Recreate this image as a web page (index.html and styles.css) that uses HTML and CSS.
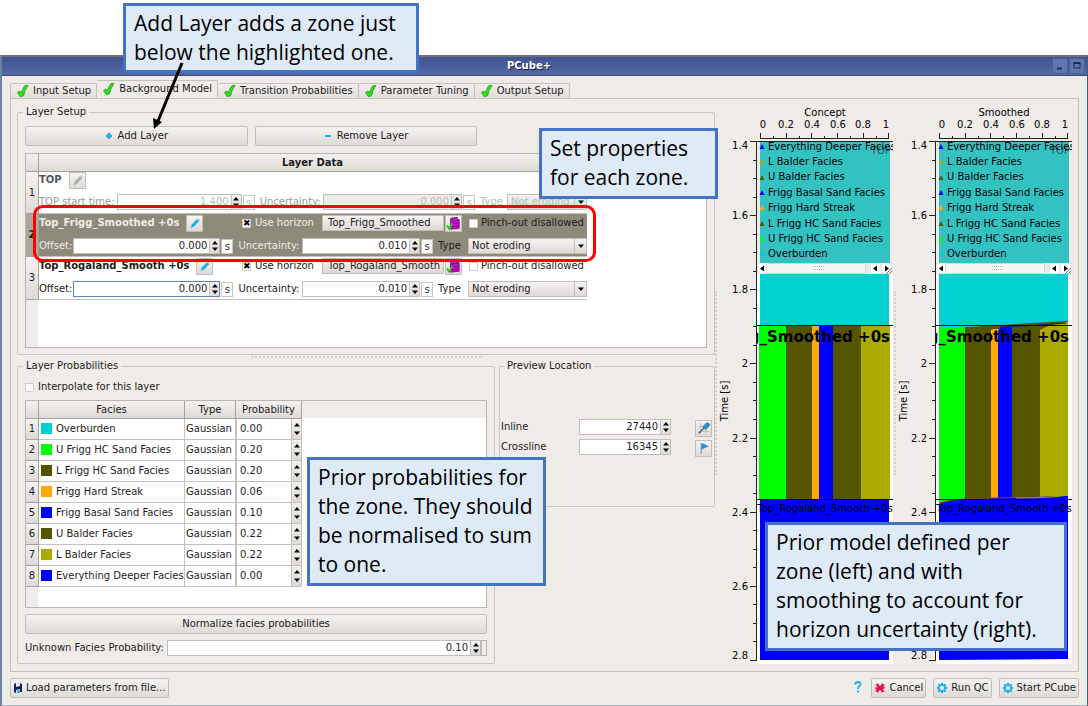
FILE: index.html
```html
<!DOCTYPE html>
<html lang="en">
<head>
<meta charset="utf-8">
<title>PCube+</title>
<link rel="stylesheet" href="styles.css">
</head>
<body>
<svg class="defs" aria-hidden="true">
  <defs>
    <symbol id="check" viewBox="0 0 12 12"><path d="M0.5 7.5 L3 6 L4.5 7.5 Q6 2.5 8 0.5 L11 0.5 Q7.5 5.500 6.500 11 L3 11.5 Z" fill="#2be01a" stroke="#149a0c" stroke-width=".7"/></symbol>
    <symbol id="up" viewBox="0 0 6 4"><path d="M3 0 L6 3.5 H0 Z"/></symbol>
    <symbol id="down" viewBox="0 0 6 4"><path d="M3 4 L6 .5 H0 Z"/></symbol>
    <symbol id="pencil" viewBox="0 0 16 16"><path d="M4 12.5 L4.8 9.2 L10.6 3.4 L13 5.6 L7.2 11.5 Z" fill="currentColor"/><path d="M3.6 13 L4.5 10 L6.8 12.1 Z" fill="#b9b4aa"/><path d="M10.6 3.4 L12 2.2 L14 4.3 L13 5.6 Z" fill="#c9c6c0"/></symbol>
    <symbol id="store" viewBox="0 0 16 16"><path d="M5 2.5 L12 1.5 V4 H14 V13 L5 14 Z" fill="#e400e8"/><path d="M5 5.5 L13.5 4.5 M5 8.5 L13.5 7.5 M5 11.5 L13.5 10.5 M5 2.5 L12 1.5 V4 H14 V13 L5 14 Z" fill="none" stroke="#5b1667" stroke-width="1"/><path d="M1 10 L3.5 13.5 L7 7.5" fill="none" stroke="#2fbf22" stroke-width="2"/></symbol>
    <symbol id="gear" viewBox="0 0 12 12"><path d="M6 1 V11 M1 6 H11 M2.4 2.4 L9.6 9.6 M9.6 2.4 L2.4 9.6" stroke="#1aa2e6" stroke-width="2"/><circle cx="6" cy="6" r="3" fill="#f4f2ef" stroke="#27b6f5" stroke-width="2"/></symbol>
  </defs>
</svg>

<main class="window">
  <header class="titlebar">
    <h1>PCube+</h1>
    <div class="winbtns">
      <button aria-label="Minimize"><svg width="14" height="14"><path d="M4 9.5 H9" stroke="#1d2c50" stroke-width="2"/></svg></button>
      <button aria-label="Maximize"><svg width="14" height="14"><rect x="4" y="4" width="6" height="5" fill="none" stroke="#1d2c50"/><path d="M3.5 4 H10.5" stroke="#1d2c50" stroke-width="2"/></svg></button>
    </div>
  </header>

  <nav class="tabs">
    <button><svg class="i12"><use href="#check"/></svg>Input Setup</button>
    <button class="on"><svg class="i12"><use href="#check"/></svg>Background Model</button>
    <button><svg class="i12"><use href="#check"/></svg>Transition Probabilities</button>
    <button><svg class="i12"><use href="#check"/></svg>Parameter Tuning</button>
    <button><svg class="i12"><use href="#check"/></svg>Output Setup</button>
  </nav>

  <section class="panel">
    <div class="left">
      <fieldset class="setup">
        <legend>Layer Setup</legend>
        <div class="btnrow">
          <button class="btn"><svg class="i8" viewBox="0 0 8 8"><path d="M4 1 V7 M1 4 H7" stroke="#17b2ee" stroke-width="2.4"/></svg>Add Layer</button>
          <button class="btn"><svg class="i8" viewBox="0 0 8 8"><path d="M1 4 H7" stroke="#17b2ee" stroke-width="2"/></svg>Remove Layer</button>
        </div>
        <div class="box layerbox">
          <table class="layers">
            <thead><tr><th></th><th>Layer Data</th></tr></thead>
            <tbody>
              <tr class="off">
                <th>1</th>
                <td>
                  <div class="line"><b>TOP</b><button class="mini gray" aria-label="Edit name" disabled><svg class="i16"><use href="#pencil"/></svg></button></div>
                  <div class="line l2">
                    <label for="t1">TOP start time:</label>
                    <span class="spin w125"><input id="t1" value="1.400" disabled><span class="arr"><svg><use href="#up"/></svg><svg><use href="#down"/></svg></span></span>
                    <span class="unit">s</span>
                    <label class="un" for="u1">Uncertainty:</label>
                    <span class="spin fill dis"><input id="u1" value="0.000" disabled><span class="arr"><svg><use href="#up"/></svg><svg><use href="#down"/></svg></span></span>
                    <span class="unit">s</span>
                    <label class="ty" for="y1">Type</label>
                    <span class="sel w80"><select id="y1" disabled><option>Not eroding</option></select><svg><use href="#down"/></svg></span>
                  </div>
                </td>
              </tr>
              <tr class="sel-row">
                <th>2</th>
                <td>
                  <div class="line"><span class="name"><b>Top_Frigg_Smoothed +0s</b><button class="mini" aria-label="Edit name"><svg class="i16"><use href="#pencil"/></svg></button></span>
                    <label class="hz"><input type="checkbox" checked>Use horizon</label><button class="pick">Top_Frigg_Smoothed</button><button class="mini st" aria-label="Pick horizon"><svg class="i16"><use href="#store"/></svg></button>
                    <label class="po"><input type="checkbox">Pinch-out disallowed</label></div>
                  <div class="line l2">
                    <label for="o2">Offset:</label>
                    <span class="spin w146"><input id="o2" value="0.000"><span class="arr"><svg><use href="#up"/></svg><svg><use href="#down"/></svg></span></span>
                    <span class="unit">s</span>
                    <label class="un" for="u2">Uncertainty:</label>
                    <span class="spin fill"><input id="u2" value="0.010"><span class="arr"><svg><use href="#up"/></svg><svg><use href="#down"/></svg></span></span>
                    <span class="unit">s</span>
                    <label class="ty" for="y2">Type</label>
                    <span class="sel w119"><select id="y2"><option>Not eroding</option></select><svg><use href="#down"/></svg></span>
                  </div>
                </td>
              </tr>
              <tr>
                <th>3</th>
                <td>
                  <div class="line"><span class="name"><b>Top_Rogaland_Smooth +0s</b><button class="mini" aria-label="Edit name"><svg class="i16"><use href="#pencil"/></svg></button></span>
                    <label class="hz"><input type="checkbox" checked>Use horizon</label><button class="pick">Top_Rogaland_Smooth</button><button class="mini st" aria-label="Pick horizon"><svg class="i16"><use href="#store"/></svg></button>
                    <label class="po"><input type="checkbox">Pinch-out disallowed</label></div>
                  <div class="line l2">
                    <label for="o3">Offset:</label>
                    <span class="spin w146 focus"><input id="o3" value="0.000"><span class="arr"><svg><use href="#up"/></svg><svg><use href="#down"/></svg></span></span>
                    <span class="unit">s</span>
                    <label class="un" for="u3">Uncertainty:</label>
                    <span class="spin fill"><input id="u3" value="0.010"><span class="arr"><svg><use href="#up"/></svg><svg><use href="#down"/></svg></span></span>
                    <span class="unit">s</span>
                    <label class="ty" for="y3">Type</label>
                    <span class="sel w119"><select id="y3"><option>Not eroding</option></select><svg><use href="#down"/></svg></span>
                  </div>
                </td>
              </tr>
            </tbody>
          </table>
        </div>
      </fieldset>
      <div class="hsplit"></div>
      <div class="lower">
        <fieldset class="probs">
          <legend>Layer Probabilities</legend>
          <label class="interp"><input type="checkbox">Interpolate for this layer</label>
          <div class="box faciesbox">
            <table class="facies">
              <thead><tr><th></th><th>Facies</th><th>Type</th><th>Probability</th></tr></thead>
              <tbody>
                <tr><th>1</th><td><i class="sw teal"></i>Overburden</td><td>Gaussian</td><td><span class="spin"><input aria-label="Probability 1" value="0.00"><span class="arr"><svg><use href="#up"/></svg><svg><use href="#down"/></svg></span></span></td></tr>
                <tr><th>2</th><td><i class="sw green"></i>U Frigg HC Sand Facies</td><td>Gaussian</td><td><span class="spin"><input aria-label="Probability 2" value="0.20"><span class="arr"><svg><use href="#up"/></svg><svg><use href="#down"/></svg></span></span></td></tr>
                <tr><th>3</th><td><i class="sw olive"></i>L Frigg HC Sand Facies</td><td>Gaussian</td><td><span class="spin"><input aria-label="Probability 3" value="0.20"><span class="arr"><svg><use href="#up"/></svg><svg><use href="#down"/></svg></span></span></td></tr>
                <tr><th>4</th><td><i class="sw orange"></i>Frigg Hard Streak</td><td>Gaussian</td><td><span class="spin"><input aria-label="Probability 4" value="0.06"><span class="arr"><svg><use href="#up"/></svg><svg><use href="#down"/></svg></span></span></td></tr>
                <tr><th>5</th><td><i class="sw blue"></i>Frigg Basal Sand Facies</td><td>Gaussian</td><td><span class="spin"><input aria-label="Probability 5" value="0.10"><span class="arr"><svg><use href="#up"/></svg><svg><use href="#down"/></svg></span></span></td></tr>
                <tr><th>6</th><td><i class="sw olive"></i>U Balder Facies</td><td>Gaussian</td><td><span class="spin"><input aria-label="Probability 6" value="0.22"><span class="arr"><svg><use href="#up"/></svg><svg><use href="#down"/></svg></span></span></td></tr>
                <tr><th>7</th><td><i class="sw yellow"></i>L Balder Facies</td><td>Gaussian</td><td><span class="spin"><input aria-label="Probability 7" value="0.22"><span class="arr"><svg><use href="#up"/></svg><svg><use href="#down"/></svg></span></span></td></tr>
                <tr><th>8</th><td><i class="sw blue"></i>Everything Deeper Facies</td><td>Gaussian</td><td><span class="spin"><input aria-label="Probability 8" value="0.00"><span class="arr"><svg><use href="#up"/></svg><svg><use href="#down"/></svg></span></span></td></tr>
              </tbody>
            </table>
          </div>
          <button class="btn norm">Normalize facies probabilities</button>
          <div class="unknown">
            <label for="unk">Unknown Facies Probability:</label>
            <span class="spin fill"><input id="unk" value="0.10"><span class="arr"><svg><use href="#up"/></svg><svg><use href="#down"/></svg></span></span>
            <span class="stub"></span>
          </div>
        </fieldset>
        <fieldset class="preview">
          <legend>Preview Location</legend>
          <div class="loc">
            <div class="locgrid">
              <label for="inl">Inline</label>
              <span class="spin"><input id="inl" value="27440"><span class="arr"><svg><use href="#up"/></svg><svg><use href="#down"/></svg></span></span>
              <label for="xl">Crossline</label>
              <span class="spin"><input id="xl" value="16345"><span class="arr"><svg><use href="#up"/></svg><svg><use href="#down"/></svg></span></span>
            </div>
            <div class="locbtns">
              <button class="mini" aria-label="Pick position"><svg class="i16" viewBox="0 0 16 16"><path d="M5 2 V14 M10 3 V14 M2 6 H13 M2 11 H14" stroke="#c2bfba"/><path d="M3 13 L9 7" stroke="#4f5d68" stroke-width="1.5"/><path d="M7 6 L12 1.500 L15 4 L10.500 9 Z" fill="#2f8fd8" stroke="#28527a" stroke-width=".6"/></svg></button>
              <button class="mini" aria-label="Place flag"><svg class="i16" viewBox="0 0 16 16"><path d="M5.5 2 V14" stroke="#75808a"/><path d="M6 2 L13.500 5.500 L6 9 Z" fill="#1590f0"/></svg></button>
            </div>
          </div>
        </fieldset>
      </div>
    </div>
    <div class="vsplit"></div>
    <svg class="plot" viewBox="0 0 177 558" role="img" aria-label="Concept model">
      <text x="108" y="12" text-anchor="middle">Concept</text>
      <g text-anchor="middle"><text x="46" y="24">0</text><text x="69" y="24">0.2</text><text x="95" y="24">0.4</text><text x="121" y="24">0.6</text><text x="146" y="24">0.8</text><text x="169" y="24">1</text></g>
      <path class="axis" d="M43 34.5H172M43.5 29V35M56.5 32V35M69.5 29V35M82.5 32V35M94.5 29V35M107.5 32V35M120.5 29V35M133.5 32V35M146.5 29V35M159.5 32V35M171.5 29V35"/>
      <g text-anchor="end"><text x="31" y="45">1.4</text><text x="31" y="115">1.6</text><text x="31" y="189">1.8</text><text x="31" y="263">2</text><text x="31" y="338">2.2</text><text x="31" y="412">2.4</text><text x="31" y="486">2.6</text><text x="31" y="555">2.8</text></g>
      <path class="axis" d="M39.5 37V557M33 37.5H40M36 56.5H40M36 74.5H40M36 93.5H40M33 111.5H40M36 130.5H40M36 148.5H40M36 167.5H40M33 185.5H40M36 204.5H40M36 222.5H40M36 241.5H40M33 259.5H40M36 278.5H40M36 296.5H40M36 315.5H40M33 334.5H40M36 352.5H40M36 371.5H40M36 389.5H40M33 408.5H40M36 426.5H40M36 445.5H40M36 463.5H40M33 482.5H40M36 500.5H40M36 519.5H40M36 537.5H40M33 556.5H40"/>
      <text transform="translate(11 297) rotate(-90)" text-anchor="middle">Time [s]</text>
      <rect x="40" y="160" width="136" height="400" fill="#fff"/>
      <rect x="43" y="37" width="130" height="122" fill="#33c2c2"/>
      <rect x="43" y="170" width="129" height="52" fill="#00d0d0"/>
      <rect x="42" y="222" width="27" height="173" fill="#00ff00"/><rect x="69" y="222" width="26" height="173" fill="#555500"/><rect x="95" y="222" width="7" height="173" fill="#ffaa00"/><rect x="102" y="222" width="14" height="173" fill="#0000ff"/><rect x="116" y="222" width="28" height="173" fill="#555500"/><rect x="144" y="222" width="29" height="173" fill="#aaaa00"/>
      <rect x="43" y="396" width="129" height="160" fill="#0000ff"/>
      <path d="M40 37.5H176" stroke="#222"/><path d="M40 221.5H176M40 395.5H176" stroke="#111"/>
      <text x="154" y="50" fill="#275b60">TOP</text>
      <g transform="translate(1 -4)">
        <path d="M44 44 l2.5 5 h-5z" fill="#00f"/><path d="M44 59 l2.5 5 h-5z" fill="#aa0"/><path d="M44 75 l2.5 5 h-5z" fill="#550"/><path d="M44 90 l2.5 5 h-5z" fill="#00f"/><path d="M44 105 l2.5 5 h-5z" fill="#fa0"/><path d="M44 121 l2.5 5 h-5z" fill="#550"/><path d="M44 136 l2.5 5 h-5z" fill="#0f0"/><path d="M44 151 l2.5 5 h-5z" fill="#00d0d0"/>
      </g>
      <svg x="40" y="37" width="136" height="125" viewBox="40 37 136 125">
        <text x="51" y="46">Everything Deeper Facies</text><text x="51" y="61">L Balder Facies</text><text x="51" y="76">U Balder Facies</text><text x="51" y="92">Frigg Basal Sand Facies</text><text x="51" y="107">Frigg Hard Streak</text><text x="51" y="123">L Frigg HC Sand Facies</text><text x="51" y="138">U Frigg HC Sand Facies</text><text x="51" y="153">Overburden</text>
      </svg>
      <g><rect x="40" y="159" width="136" height="11" fill="#eceae7"/><rect x="49.5" y="159.5" width="99" height="10" rx="1" fill="#f6f5f3" stroke="#d8d5d1"/><path d="M96 162.5H108M96 165.5H108" stroke="#bbb" stroke-dasharray="1 1"/><rect x="41" y="160" width="8" height="9" fill="#fff"/><rect x="154" y="160" width="9" height="9" fill="#fff"/><rect x="165" y="160" width="9" height="9" fill="#fff"/><path d="M47 161.500v6l-4-3zM160 161.500v6l-4-3zM168 161.500v6l4-3z"/><path d="M169 170l6-6M172 170l3-3" stroke="#777"/></g>
      <svg x="40" y="222" width="136" height="30" viewBox="40 222 136 30"><text class="big" x="173" y="238" text-anchor="end">Top_Frigg_Smoothed +0s</text></svg>
      <text x="108" y="408" text-anchor="middle">Top_Rogaland_Smooth +0s</text>
    </svg>
    <div class="vsplit"></div>
    <svg class="plot" viewBox="0 0 177 558" role="img" aria-label="Smoothed model">
      <text x="108" y="12" text-anchor="middle">Smoothed</text>
      <g text-anchor="middle"><text x="46" y="24">0</text><text x="69" y="24">0.2</text><text x="95" y="24">0.4</text><text x="121" y="24">0.6</text><text x="146" y="24">0.8</text><text x="169" y="24">1</text></g>
      <path class="axis" d="M43 34.5H172M43.5 29V35M56.5 32V35M69.5 29V35M82.5 32V35M94.5 29V35M107.5 32V35M120.5 29V35M133.5 32V35M146.5 29V35M159.5 32V35M171.5 29V35"/>
      <g text-anchor="end"><text x="31" y="45">1.4</text><text x="31" y="115">1.6</text><text x="31" y="189">1.8</text><text x="31" y="263">2</text><text x="31" y="338">2.2</text><text x="31" y="412">2.4</text><text x="31" y="486">2.6</text><text x="31" y="555">2.8</text></g>
      <path class="axis" d="M39.5 37V557M33 37.5H40M36 56.5H40M36 74.5H40M36 93.5H40M33 111.5H40M36 130.5H40M36 148.5H40M36 167.5H40M33 185.5H40M36 204.5H40M36 222.5H40M36 241.5H40M33 259.5H40M36 278.5H40M36 296.5H40M36 315.5H40M33 334.5H40M36 352.5H40M36 371.5H40M36 389.5H40M33 408.5H40M36 426.5H40M36 445.5H40M36 463.5H40M33 482.5H40M36 500.5H40M36 519.5H40M36 537.5H40M33 556.5H40"/>
      <text transform="translate(11 297) rotate(-90)" text-anchor="middle">Time [s]</text>
      <rect x="40" y="160" width="136" height="400" fill="#fff"/>
      <rect x="43" y="37" width="130" height="122" fill="#33c2c2"/>
      <path d="M43 170H172V218L120 221L69 223L43 226Z" fill="#00d0d0"/>
      <path d="M43 224Q54 222 69 223V396L43 400Z" fill="#00ff00"/><path d="M69 223L172 217V226H69Z" fill="#555500"/><rect x="69" y="224" width="26" height="171" fill="#555500"/><path d="M95 227l2-2h6v170h-8z" fill="#ffaa00"/><path d="M102 227l3-4h11v172h-14z" fill="#0000ff"/><rect x="116" y="223" width="28" height="173" fill="#555500"/><path d="M144 227Q148 221 172 218V396H144Z" fill="#aaaa00"/>
      <path d="M104 223Q140 222 170 219" fill="none" stroke="#1a0fa0"/>
      <path d="M43 400Q50 396 70 395Q110 393.5 172 392V555L43 556Z" fill="#0000ff"/><path d="M43 399Q55 395 80 394.5L144 393" fill="none" stroke="#775500"/><path d="M120 394Q155 394 172 391" fill="none" stroke="#aaaa00"/>
      <path d="M40 37.5H176" stroke="#222"/><path d="M40 221.5H176M40 395.5H176" stroke="#111"/>
      <text x="154" y="50" fill="#275b60">TOP</text>
      <g transform="translate(1 -4)">
        <path d="M44 44 l2.5 5 h-5z" fill="#00f"/><path d="M44 59 l2.5 5 h-5z" fill="#aa0"/><path d="M44 75 l2.5 5 h-5z" fill="#550"/><path d="M44 90 l2.5 5 h-5z" fill="#00f"/><path d="M44 105 l2.5 5 h-5z" fill="#fa0"/><path d="M44 121 l2.5 5 h-5z" fill="#550"/><path d="M44 136 l2.5 5 h-5z" fill="#0f0"/><path d="M44 151 l2.5 5 h-5z" fill="#00d0d0"/>
      </g>
      <svg x="40" y="37" width="136" height="125" viewBox="40 37 136 125">
        <text x="51" y="46">Everything Deeper Facies</text><text x="51" y="61">L Balder Facies</text><text x="51" y="76">U Balder Facies</text><text x="51" y="92">Frigg Basal Sand Facies</text><text x="51" y="107">Frigg Hard Streak</text><text x="51" y="123">L Frigg HC Sand Facies</text><text x="51" y="138">U Frigg HC Sand Facies</text><text x="51" y="153">Overburden</text>
      </svg>
      <g><rect x="40" y="159" width="136" height="11" fill="#eceae7"/><rect x="49.5" y="159.5" width="99" height="10" rx="1" fill="#f6f5f3" stroke="#d8d5d1"/><path d="M96 162.5H108M96 165.5H108" stroke="#bbb" stroke-dasharray="1 1"/><rect x="41" y="160" width="8" height="9" fill="#fff"/><rect x="154" y="160" width="9" height="9" fill="#fff"/><rect x="165" y="160" width="9" height="9" fill="#fff"/><path d="M47 161.500v6l-4-3zM160 161.500v6l-4-3zM168 161.500v6l4-3z"/><path d="M169 170l6-6M172 170l3-3" stroke="#777"/></g>
      <svg x="40" y="222" width="136" height="30" viewBox="40 222 136 30"><text class="big" x="173" y="238" text-anchor="end">Top_Frigg_Smoothed +0s</text></svg>
      <text x="108" y="408" text-anchor="middle">Top_Rogaland_Smooth +0s</text>
    </svg>
  </section>

  <footer class="foot">
    <button class="btn"><svg class="i10" viewBox="0 0 10 10"><path d="M1 1 L3 0 V4 L7 3 V0 L9 1 V9 H7 V6 L3 7 V10 L1 9 Z" fill="#16205e"/><rect x="4" y="7" width="3" height="3" fill="#35c0f0"/></svg>Load parameters from file...</button>
    <span class="grow"></span>
    <button class="help" aria-label="Help"><svg width="8" height="12" viewBox="0 0 8 12"><path d="M1 3.500 Q1.500 1 4 1 Q7 1 6.500 3.500 Q6 5 4.500 6 Q4 6.500 4 8 M4 9.500 V11.500" fill="none" stroke="#17b2ee" stroke-width="1.800"/></svg></button>
    <button class="btn"><svg class="i12" viewBox="0 0 12 12"><path d="M2.500 2 L9.500 10 M9.500 2 L2.500 10 M1.500 6.500 L10.500 5.500" stroke="#e8114f" stroke-width="2.600"/></svg>Cancel</button>
    <button class="btn"><svg class="i12"><use href="#gear"/></svg>Run QC</button>
    <button class="btn"><svg class="i12"><use href="#gear"/></svg>Start PCube</button>
  </footer>
</main>

<div class="ring"></div>
<aside class="note n1">Add Layer adds a zone just<br>below the highlighted one.</aside>
<svg class="arrow" width="34" height="70" viewBox="0 0 34 70"><path d="M31 2 L7 60" stroke="#000" stroke-width="3"/><path d="M2 57 L11 61 L3 68 Z"/></svg>
<aside class="note n2">Set properties<br>for each zone.</aside>
<aside class="note n3">Prior probabilities for<br>the zone. They should<br>be normalised to sum<br>to one.</aside>
<aside class="note n4">Prior model defined per<br>zone (left) and with<br>smoothing to account for<br>horizon uncertainty (right).</aside>
</body>
</html>
```
FILE: styles.css
```css
* { box-sizing: border-box; }
body {
  margin: 0;
  padding-top: 55px;
  min-height: 100vh;
  position: relative;
  display: flex;
  flex-direction: column;
  background: #fff;
  font: 10px/12px "DejaVu Sans", sans-serif;
  color: #1c1c1c;
}
button, input, select { font: inherit; color: inherit; margin: 0; padding: 0; min-width: 0; }
.defs { position: absolute; width: 0; height: 0; }
.i8 { width: 8px; height: 8px; }
.i10 { width: 10px; height: 10px; }
.i12 { width: 12px; height: 12px; }
.i16 { width: 15px; height: 15px; }

.window {
  flex: 1;
  display: flex;
  flex-direction: column;
  background: #efebe7;
  border-left: 2px solid #6684a6;
  border-right: 1px solid #3f5f80;
  border-bottom: 1px solid #a9bac6;
}
.titlebar {
  height: 21px;
  display: flex;
  align-items: center;
  padding-right: 2px;
  background: linear-gradient(#415390, #5468a5);
  border-top: 2px solid #6d6f76;
  border-bottom: 1px solid #3c4c80;
}
.titlebar h1 { flex: 1; margin: 0; padding-left: 4px; text-align: center; font-size: 10px; color: #fff; text-shadow: 1px 1px 0 #223; }
.winbtns { display: flex; gap: 1px; }
.winbtns button { width: 16px; height: 16px; border: 1px solid #4a5d96; background: #6074ae; display: grid; place-items: center; }

.tabs { display: flex; align-items: flex-end; padding: 4px 8px 0; }
.tabs button {
  height: 15px;
  display: flex;
  align-items: center;
  gap: 4px;
  padding: 0 5px 0 6px;
  border: 1px solid #c4c0bb;
  border-bottom: 0;
  border-left-width: 0;
  border-radius: 2px 2px 0 0;
  background: linear-gradient(#f1eeeb, #e2dedA);
}
.tabs button:first-child { border-left-width: 1px; }
.tabs .on { height: 18px; padding-bottom: 1px; background: #efebe7; }

.panel {
  flex: 1;
  display: flex;
  margin: 0 8px;
  padding: 5px 5px 7px 6px;
  border: 1px solid #c4c0bb;
}
.left { flex: 1; min-width: 0; display: flex; flex-direction: column; padding-top: 2px; }
fieldset { min-width: 0; margin: 0; border: 1px solid #c9c5c0; border-radius: 2px; padding: 0 7px 6px; }
legend { padding: 0 3px; line-height: 12px; margin-left: -2px; }
.btn {
  height: 20px;
  display: flex;
  align-items: center;
  justify-content: center;
  gap: 5px;
  padding: 0 4px;
  border: 1px solid #c2beb9;
  border-radius: 2px;
  background: linear-gradient(#f5f3f1, #dedad6);
}
.btnrow { display: grid; grid-template-columns: repeat(3, 1fr); gap: 7px; padding-top: 8px; margin-bottom: 7px; }
.box { background: linear-gradient(90deg, #efebe7 12px, #fff 12px); border: 1px solid #b9b5b0; }
.layerbox { height: 195px; }
table { border-collapse: separate; border-spacing: 0; }
th { background: linear-gradient(#f4f2f0, #dedad6); border: solid #a5a19c; border-width: 0 1px 1px 0; padding: 0; font-weight: normal; }
td { padding: 0; }
.layers { table-layout: fixed; width: 561px; max-width: 100%; }
.layers thead tr { height: 18px; }
.layers thead th { font-weight: bold; }
.layers tr > :first-child { width: 13px; }
.layers tbody tr { height: 43px; }
.layers tbody td { border-bottom: 1px solid #c5c2be; vertical-align: top; }
.layers tbody .off { height: 42px; }
.off td { background: #fff; color: #9d9a96; }
.off b { color: #555; }
.sel-row td { background: #8e8a7a; color: #efece6; }
.sel-row th { background: #aaa79f; font-weight: bold; }
.line { display: flex; align-items: center; height: 18px; white-space: nowrap; }
.l2 { height: 16px; margin-top: 6px; }
.off .line:first-child { gap: 7px; height: 16px; }
.name { flex: 0 0 203px; display: flex; align-items: center; gap: 7px; }
.mini { width: 17px; height: 17px; flex: none; display: grid; place-items: center; border: 1px solid #c2beb9; background: linear-gradient(#f5f3f1, #dedad6); color: #12b0f5; }
.mini.gray { color: #aaa; }
.mini.st { margin: 0 7px 0 1px; }
.hz { flex: 0 0 80px; display: flex; align-items: center; gap: 4px; }
.po { display: flex; align-items: center; gap: 3px; color: #1c1c1c; }
.pick { flex: 0 0 122px; height: 16px; overflow: hidden; color: #1c1c1c; border: 1px solid #c2beb9; background: linear-gradient(#f5f3f1, #dedad6); text-align: left; padding-left: 5px; }
input[type=checkbox] { appearance: none; width: 9px; height: 9px; background: #fff; border: 1px solid #d0ccc8; display: grid; place-items: center; }
input[type=checkbox]:checked::before { content: "✖"; font-size: 9px; line-height: 7px; color: #000; }

.spin { display: flex; height: 16px; color: #1c1c1c; border: 1px solid #c2beb9; background: #fff; }
.spin input { flex: 1; width: 0; border: 0; background: transparent; text-align: right; padding-right: 2px; outline: 0; }
.arr { width: 10px; flex: none; display: flex; flex-direction: column; align-items: center; justify-content: space-evenly; background: linear-gradient(#f2f0ed, #dedad6); border-left: 1px solid #c2beb9; }
.arr svg { width: 6px; height: 4px; }
.fill { flex: 1; }
.w125 { width: 125px; margin-left: 2px; }
.w146 { width: 147px; margin-left: 1px; }
.focus { border-color: #5a86b5; }
.unit { width: 12px; height: 15px; margin-left: 1px; text-align: center; line-height: 13px; border: 1px solid #c9c6c2; background: #fff; color: #333; }
.un { margin: 0 2px 0 5px; }
.ty { margin: 0 7px 0 5px; color: #1c1c1c; }
.off .ty, .off .spin, .off .unit, .off .sel { color: #bdbab6; }
.off .ty { margin-right: 4px; }
.dis { background: #efebe7; }
.sel { position: relative; color: #1c1c1c; }
.sel select { appearance: none; width: 100%; height: 16px; padding-left: 3px; border: 1px solid #c2beb9; border-radius: 0; background: linear-gradient(90deg, transparent calc(100% - 12px), #c2beb9 calc(100% - 12px), #c2beb9 calc(100% - 11px), transparent 0), linear-gradient(#f5f3f1, #dedad6); opacity: 1; }
.sel svg { position: absolute; right: 3px; top: 6px; width: 6px; height: 4px; color: #111; }
.w119 { width: 119px; }
.w80 { width: 80px; }

.hsplit { height: 3px; margin: 1px 0 1px; align-self: center; width: 230px; border-top: 2px dotted #d3cfca; }
.lower { flex: 1; display: flex; gap: 4px; align-items: flex-start; }
.probs { flex: 0 1 478px; align-self: stretch; display: flex; flex-direction: column; }
.interp { display: flex; align-items: center; gap: 4px; padding: 9px 0 7px; }
.faciesbox { height: 208px; background: linear-gradient(90deg, transparent 12px, #fff 12px) 0 17px no-repeat; }
.facies thead tr { height: 18px; }
.facies tbody tr { height: 21px; }
.facies tr > :nth-child(1) { width: 13px; }
.facies tr > :nth-child(2) { width: 146px; }
.facies tr > :nth-child(3) { width: 51px; }
.facies tr > :nth-child(4) { width: 66px; }
.facies td { border: solid #c5c2be; border-width: 0 1px 1px 0; white-space: nowrap; background: #fff; }
.facies td:nth-child(3) { padding-left: 1px; }
.facies .spin { height: 20px; border-width: 0 0 0 1px; }
.facies .spin input { text-align: left; padding-left: 3px; }
.sw { display: inline-block; width: 11px; height: 11px; margin: 0 4px 0 2px; vertical-align: -2px; }
.teal { background: #00d0d0; }
.green { background: #0f0; }
.olive { background: #550; }
.orange { background: #fa0; }
.blue { background: #00f; }
.yellow { background: #aa0; }
.norm { margin: 6px 0; }
.unknown { display: flex; align-items: center; gap: 3px; }
.stub { width: 6px; height: 16px; margin-left: -3px; border: 1px solid #bbb7b2; }
.preview { flex: 1; height: 147px; padding: 0 2px 0 1px; }
.preview legend { margin-left: 3px; }
.loc { display: flex; justify-content: space-between; padding-top: 47px; }
.locgrid { display: grid; grid-template-columns: 78px 92px; row-gap: 4px; align-content: start; align-items: center; }
.locbtns { display: grid; gap: 3px; align-content: start; padding-top: 1px; }

.vsplit { flex: none; width: 2px; height: 184px; margin-top: 187px; border-left: 2px dotted #d3cfca; }
.plot { flex: none; width: 177px; height: 558px; overflow: visible; }
.plot text { font-size: 10px; }
.plot .big { font-size: 15px; font-weight: bold; }
.axis { stroke: #222; fill: none; }

.foot { display: flex; gap: 7px; padding: 6px 8px 7px; }
.foot .btn { gap: 3px; padding: 0 2px; }
.grow { flex: 1; }
.help { border: 0; background: none; width: 12px; height: 20px; }

.ring { position: absolute; left: 33px; top: 205px; width: 563px; height: 57px; border: 3px solid #f00; border-radius: 10px; }
.note {
  position: absolute;
  border: 3px solid #4472c4;
  background: #deeaf6;
  color: #000;
  font: 21px/29px "Open Sans", sans-serif;
  padding: 3px 8px;
  white-space: nowrap;
}
.n1 { left: 123px; top: 3px; width: 296px; height: 70px; }
.n2 { left: 539px; top: 128px; width: 179px; height: 71px; }
.n3 { left: 307px; top: 457px; width: 239px; height: 129px; }
.n4 { left: 765px; top: 522px; width: 302px; height: 129px; }
.arrow { position: absolute; left: 151px; top: 61px; }
```
